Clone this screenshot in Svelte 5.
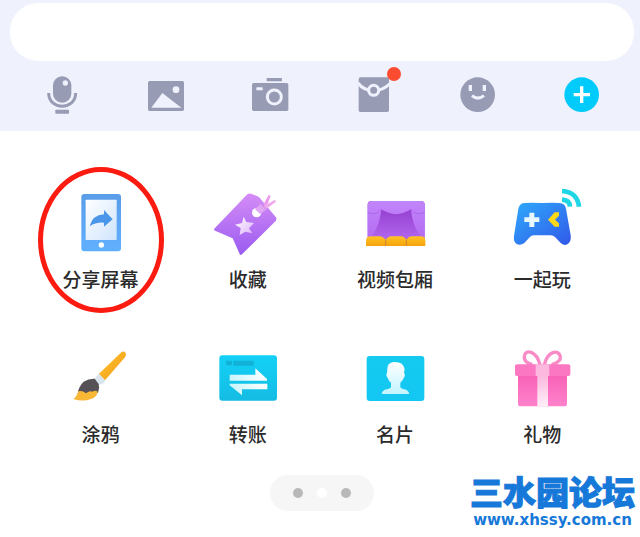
<script lang="ts">
	let message = $state('');

	const tools = [
		{ id: 'voice', label: '语音' },
		{ id: 'photo', label: '图片' },
		{ id: 'camera', label: '拍照' },
		{ id: 'packet', label: '红包' },
		{ id: 'emoji', label: '表情' },
		{ id: 'more', label: '更多' }
	];

	const apps = [
		{ id: 'screen', label: '分享屏幕', circled: true },
		{ id: 'favorite', label: '收藏' },
		{ id: 'theater', label: '视频包厢' },
		{ id: 'play', label: '一起玩' },
		{ id: 'doodle', label: '涂鸦' },
		{ id: 'transfer', label: '转账' },
		{ id: 'card', label: '名片' },
		{ id: 'gift', label: '礼物' }
	];
</script>

<div class="page">
	<header class="composer">
		<input class="message" type="text" aria-label="消息" bind:value={message} />
		<nav class="toolbar">
			{#each tools as tool}
				<button class="tool" type="button" aria-label={tool.label}>
					<svg class="tool-icon" viewBox="0 0 144 156" fill="#989bb4">
						{#if tool.id === 'voice'}
							<rect x="45" y="40" width="55" height="79" rx="27" />
							<circle cx="82" cy="60" r="8" fill="#eff1fd" />
							<path d="M32 90C32 143 113 143 113 90" fill="none" stroke="#989bb4" stroke-width="9" />
							<rect x="52" y="140" width="41" height="12" rx="2" />
						{:else if tool.id === 'photo'}
							<rect x="18" y="54" width="108" height="90" rx="5" />
							<circle cx="102" cy="80" r="10" fill="#eff1fd" />
							<path d="M28 134L61 90L118 134Z" fill="#eff1fd" />
						{:else if tool.id === 'camera'}
							<rect x="62" y="45" width="46" height="10" rx="2" />
							<rect x="18" y="60" width="109" height="84" rx="5" />
							<rect x="31" y="73" width="19" height="9" rx="2" fill="#eff1fd" />
							<circle cx="85" cy="102" r="21" fill="none" stroke="#eff1fd" stroke-width="9" />
						{:else if tool.id === 'packet'}
							<rect x="26" y="43" width="91" height="104" rx="5" />
							<path d="M24 60Q40 82 72 84Q102 80 119 62" fill="none" stroke="#eff1fd" stroke-width="9" />
							<circle cx="71" cy="82" r="15" stroke="#eff1fd" stroke-width="9" />
							<circle cx="132" cy="33" r="21" fill="#fb4c31" />
						{:else if tool.id === 'emoji'}
							<circle cx="71" cy="95" r="52" />
							<path d="M49 66V84M91 66V84" stroke="#eff1fd" stroke-width="10" />
							<path d="M54 98Q71 113 90 98" fill="none" stroke="#eff1fd" stroke-width="9" />
						{:else}
							<circle cx="71" cy="95" r="52" fill="#00cbfb" />
							<path d="M47 95H96M71 70V120" stroke="#fff" stroke-width="10" />
						{/if}
					</svg>
				</button>
			{/each}
		</nav>
	</header>

	<main class="panel">
		<div class="apps">
			{#each apps as app}
				<button class="app" class:circled={app.circled} type="button">
					<svg class="app-icon" viewBox="0 0 240 216" aria-hidden="true">
						{#if app.id === 'screen'}
							<defs>
								<linearGradient id="phone" x1="0" y1="0" x2="0" y2="1">
									<stop offset="0" stop-color="#5a9de8" /><stop offset="1" stop-color="#60b0ff" />
								</linearGradient>
								<linearGradient id="glass" x1="0" y1="0" x2="1" y2="1">
									<stop offset="0" stop-color="#fff" /><stop offset="1" stop-color="#cfe4fd" />
								</linearGradient>
							</defs>
							<rect x="61" y="21" width="119" height="172" rx="9" fill="url(#phone)" />
							<rect x="74" y="38" width="93" height="121" rx="2" fill="url(#glass)" />
							<circle cx="121" cy="174" r="8" fill="#fff" />
							<path d="M86 118Q94 84 129 82V69L155 97L129 119V107Q105 105 86 118Z" fill="#4b96e8" />
						{:else if app.id === 'favorite'}
							<defs>
								<linearGradient id="ticket" x1="0" y1="0" x2="0" y2="1">
									<stop offset="0" stop-color="#d58cf7" /><stop offset="1" stop-color="#9a5bf0" />
								</linearGradient>
								<linearGradient id="star" x1="0" y1="0" x2="1" y2="1">
									<stop offset="0" stop-color="#fff" /><stop offset="1" stop-color="#dcb3fa" />
								</linearGradient>
							</defs>
							<path d="M118 22Q123 18 130 20L153 30L205 92Q206 97 203 102L102 202Q98 206 95 201L74 154L21 131Q16 128 20 124Z" fill="url(#ticket)" />
							<path d="M107 89L115 105L138 108L123 124L133 139L112 134L95 144L98 123L81 113L102 108Z" fill="url(#star)" />
							<circle cx="146" cy="77" r="14" fill="#fff" />
							<path d="M142 67L156 80L176 68L159 49Z" fill="#d394ed" />
							<path d="M141 66L157 52L173 68L157 80Z" fill="#e3a9f4" opacity=".8" />
							<path d="M165 54L182 24L188 27L178 53Z" fill="#ed9bec" />
							<path d="M167 57L201 38L204 44L176 65Z" fill="#f0abed" />
						{:else if app.id === 'theater'}
							<defs>
								<linearGradient id="stage" x1="0" y1="0" x2="0" y2="1">
									<stop offset="0" stop-color="#8d36c9" /><stop offset="1" stop-color="#b266ee" />
								</linearGradient>
								<linearGradient id="curtain" x1="0" y1="0" x2="0" y2="1">
									<stop offset="0" stop-color="#c185fa" /><stop offset="1" stop-color="#b46af1" />
								</linearGradient>
								<linearGradient id="seat" x1="0" y1="0" x2="0" y2="1">
									<stop offset="0" stop-color="#ffc324" /><stop offset="1" stop-color="#f5a20b" />
								</linearGradient>
							</defs>
							<rect x="38" y="42" width="171" height="115" rx="11" fill="url(#stage)" />
							<path d="M38 157V53Q38 42 49 42H198Q209 42 209 53V157H207Q174 130 168 67Q123 96 79 67Q72 130 40 157Z" fill="url(#curtain)" />
							<path d="M38 76Q63 88 79 67M209 76Q184 88 168 67" fill="none" stroke="#a65de0" stroke-width="2" />
							<path d="M33 177V161Q33 148 48 148H72Q88 148 92 163Q96 148 110 148H137Q151 148 154 163Q157 148 172 148H197Q211 148 211 161V177Z" fill="url(#seat)" />
							<path d="M92 154V177M154 154V177" stroke="#c7862c" stroke-width="3" />
						{:else if app.id === 'play'}
							<defs>
								<linearGradient id="pad" x1="0" y1="0" x2="1" y2="1">
									<stop offset="0" stop-color="#2fa9fc" /><stop offset="1" stop-color="#3159e8" />
								</linearGradient>
							</defs>
							<path d="M62 49Q70 46 121 48Q173 46 181 50Q189 52 192 65L206 145Q209 163 196 172Q184 178 174 166L159 150Q154 145 146 145H96Q88 145 83 151L67 168Q56 177 44 171Q33 162 36 147L49 65Q52 53 62 49Z" fill="url(#pad)" />
							<path d="M82 77H97V91H112V105H97V120H82V105H67V91H82Z" fill="#e8f6ff" />
							<path d="M158 76H171V86L159 98L171 109V119H158L138 98Z" fill="#ffd817" />
							<path d="M180 12Q226 15 231 59M180 38Q203 39 204 59" fill="none" stroke="#20d5e5" stroke-width="14" />
						{:else if app.id === 'doodle'}
							<defs>
								<linearGradient id="handle" x1="0" y1="0" x2="1" y2="1">
									<stop offset="0" stop-color="#ffc42e" /><stop offset="1" stop-color="#f29c18" />
								</linearGradient>
							</defs>
							<path d="M113 96L182 30Q189 26 194 33Q197 39 192 46L132 115Z" fill="url(#handle)" />
							<path d="M108 101L114 95L133 116L127 124L112 130L100 111Z" fill="#d8e5ef" />
							<path d="M101 110Q83 109 68 119Q52 133 50 157L81 160L111 152Q117 139 113 126Z" fill="#555156" />
							<path d="M52 148Q64 145 75 154Q86 145 95 149Q102 144 110 149Q108 166 90 171Q66 180 37 171Q47 165 52 148Z" fill="#f8b735" />
						{:else if app.id === 'transfer'}
							<defs>
								<linearGradient id="bill" x1="0" y1="0" x2="0" y2="1">
									<stop offset="0" stop-color="#14d1f7" /><stop offset="1" stop-color="#14bce3" />
								</linearGradient>
								<linearGradient id="arrows" x1="0" y1="0" x2="1" y2="0">
									<stop offset="0" stop-color="#c8f5fc" /><stop offset="1" stop-color="#fff" />
								</linearGradient>
							</defs>
							<rect x="34" y="40" width="173" height="136" rx="9" fill="url(#bill)" />
							<path d="M54 56H72V70H54ZM76 56H137V71H76Z" fill="#11b1d8" />
							<path d="M65 98H142V79L177 111V116H65Z" fill="url(#arrows)" />
							<path d="M65 125H178V142H102V160L65 130Z" fill="url(#arrows)" />
						{:else if app.id === 'card'}
							<defs>
								<linearGradient id="contact" x1="0" y1="0" x2="0" y2="1">
									<stop offset="0" stop-color="#14caef" /><stop offset="1" stop-color="#13c7f3" />
								</linearGradient>
								<linearGradient id="person" x1="0" y1="0" x2="0" y2="1">
									<stop offset="0" stop-color="#fff" /><stop offset="1" stop-color="#c2f4ff" />
								</linearGradient>
							</defs>
							<rect x="35" y="42" width="173" height="135" rx="9" fill="url(#contact)" />
							<path d="M97 80Q97 62 116 60Q143 58 148 78Q150 83 147 93Q153 98 146 109Q142 117 136 122V136Q139 141 154 143Q162 148 163 156H80Q81 147 89 143Q104 141 108 136V122Q101 117 98 108Q91 98 96 94Z" fill="url(#person)" />
						{:else}
							<defs>
								<linearGradient id="box" x1="0" y1="0" x2="0" y2="1">
									<stop offset="0" stop-color="#f761b6" /><stop offset="1" stop-color="#ff82cb" />
								</linearGradient>
								<linearGradient id="ribbon" x1="0" y1="0" x2="0" y2="1">
									<stop offset="0" stop-color="#fbb9df" /><stop offset="1" stop-color="#fff0f8" />
								</linearGradient>
							</defs>
							<path d="M114 68C103 26 71 20 67 42Q63 60 91 68M127 68C137 27 169 21 175 43Q177 60 149 68" fill="none" stroke="#f98bc7" stroke-width="10" />
							<path d="M48 98H195V186Q195 193 187 193H56Q48 193 48 186Z" fill="url(#box)" />
							<rect x="39" y="67" width="166" height="35" rx="6" fill="#fb77c1" />
							<path d="M101 67H142V102H101Z" fill="#fdb8df" />
							<path d="M106 102H138V193H106Z" fill="url(#ribbon)" />
						{/if}
					</svg>
					<span class="app-label">{app.label}</span>
				</button>
			{/each}
		</div>

		<div class="pager">
			<button class="dot" type="button" aria-label="第1页"></button>
			<button class="dot current" type="button" aria-label="第2页"></button>
			<button class="dot" type="button" aria-label="第3页"></button>
		</div>
	</main>

	<div class="watermark">
		<span class="site-name">三水园论坛</span>
		<span class="site-url">www.xhssy.com.cn</span>
	</div>
</div>

<style>
	:global(body) {
		background: #fff;
	}

	.page {
		position: relative;
		overflow: hidden;
		font-family: "Noto Sans CJK SC", sans-serif;
		color: #2b2b2b;
	}

	button {
		padding: 0;
		border: 0;
		background: none;
		font: inherit;
		color: inherit;
		cursor: pointer;
	}

	.composer {
		padding: 3px 6px 16px 10px;
		background: #eff1fd;
	}

	.message {
		display: block;
		box-sizing: border-box;
		width: 100%;
		height: 58px;
		padding: 0 24px;
		border: 0;
		border-radius: 28px;
		outline: none;
		background: #fff;
		font: inherit;
		font-size: 19px;
	}

	.toolbar {
		display: grid;
		grid-template-columns: repeat(6, 1fr);
		margin-top: 2px;
	}

	.tool {
		display: flex;
		justify-content: center;
	}

	.tool-icon {
		width: 48px;
		height: 52px;
		overflow: visible;
	}

	.panel {
		padding: 56px 24px 26px 27px;
	}

	.apps {
		display: grid;
		grid-template-columns: repeat(4, 1fr);
		row-gap: 49px;
	}

	.app {
		position: relative;
		display: flex;
		flex-direction: column;
		align-items: center;
		gap: 6px;
	}

	.app-icon {
		width: 80px;
		height: 72px;
		overflow: visible;
	}

	.app-label {
		font-size: 19px;
		font-weight: 500;
		line-height: 28px;
		white-space: nowrap;
	}

	.circled::after {
		content: '';
		position: absolute;
		top: 50%;
		left: 50%;
		box-sizing: border-box;
		width: 126px;
		height: 146px;
		border: 5px solid #fc1b10;
		border-radius: 50%;
		transform: translate(-50%, -50%);
	}

	.pager {
		display: flex;
		align-items: center;
		justify-content: center;
		gap: 14px;
		width: 104px;
		height: 36px;
		margin: 27px auto 0;
		border-radius: 18px;
		background: #f6f6f6;
	}

	.dot {
		width: 10px;
		height: 10px;
		border-radius: 50%;
		background: #b8b8b8;
	}

	.dot.current {
		background: #fff;
	}

	.watermark {
		position: absolute;
		right: 5px;
		bottom: 7px;
		display: flex;
		flex-direction: column;
		align-items: center;
		color: #1678d8;
	}

	.site-name {
		font-size: 33px;
		font-weight: 900;
		line-height: 38px;
		-webkit-text-stroke: 1px #1678d8;
	}

	.site-url {
		font-family: "DejaVu Sans", sans-serif;
		font-size: 15px;
		font-weight: 700;
		line-height: 20px;
	}
</style>
